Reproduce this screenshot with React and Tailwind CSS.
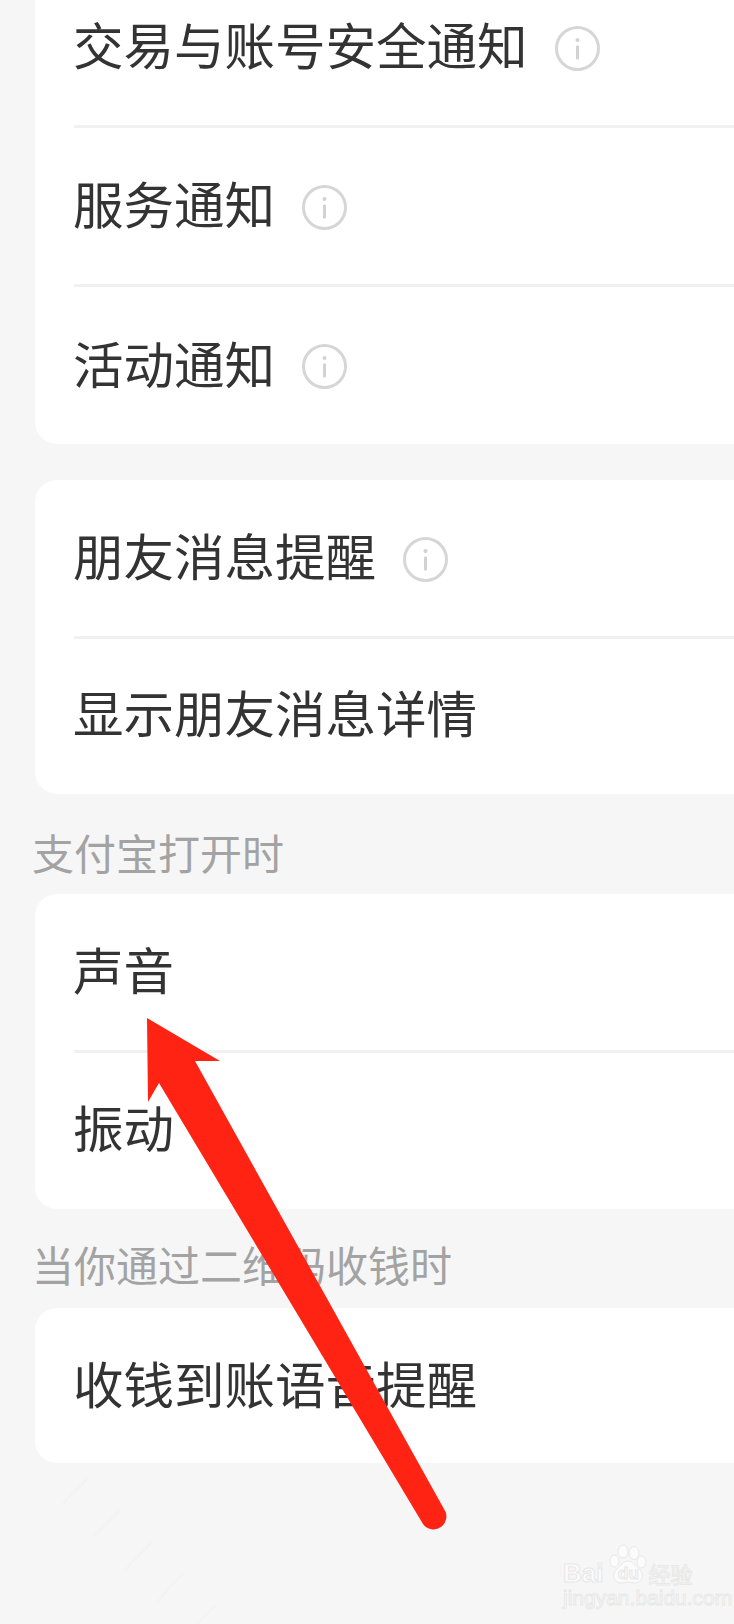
import React from 'react';

const FONT = "font-['Noto_Sans_CJK_SC','Noto_Sans',sans-serif]";

const InfoIcon = () => (
  <svg width="47" height="47" viewBox="0 0 47 47" fill="none" className="ml-[26px] mt-[2px] shrink-0">
    <circle cx="23.5" cy="23.5" r="21" stroke="#d6d6d6" strokeWidth="3" />
    <circle cx="23.5" cy="15" r="2" fill="#d2d2d2" />
    <rect x="22" y="20.5" width="3" height="14" rx="1" fill="#d2d2d2" />
  </svg>
);

const Row = ({ label, info, className = 'h-[156px]', textClass = '-mt-[7px]' }) => (
  <div className={`flex items-center ${className}`}>
    <span className={`text-[50.5px] leading-none text-[#333333] whitespace-nowrap ${textClass}`}>{label}</span>
    {info && <InfoIcon />}
  </div>
);

const Divider = () => <div className="ml-px h-[3px] bg-[#f1f1f1]" />;

const Card = ({ children, className = '' }) => (
  <div className={`ml-[35px] pl-[38px] bg-white rounded-l-[22px] ${className}`}>{children}</div>
);

const SectionLabel = ({ children, className = '' }) => (
  <div className={`ml-[32px] text-[42px] leading-none text-[#a3a3a3] whitespace-nowrap ${className}`}>{children}</div>
);

// baidu jingyan watermark, bottom right corner
const Watermark = () => (
  <div className="absolute right-[41px] bottom-[16px] w-[130px] flex flex-col gap-[4px] text-[#fbfbfb] [-webkit-text-stroke:1px_#e8e8e8]">
    <div className="flex items-end">
      <span className="text-[26px] leading-[22px] font-['Liberation_Sans',sans-serif] font-bold">Bai</span>
      <div className="relative ml-[5px] w-[40px] h-[40px] shrink-0">
        <svg width="40" height="40" viewBox="0 0 40 40" fill="#fbfbfb" stroke="#e8e8e8" strokeWidth="1">
          <ellipse cx="15" cy="7.5" rx="5" ry="6.5" />
          <ellipse cx="26" cy="9" rx="5" ry="6.5" />
          <ellipse cx="6.5" cy="17" rx="4.5" ry="6" />
          <ellipse cx="33.5" cy="18" rx="4.5" ry="6" />
          <path d="M20 17c5 0 7 5 11 8 5 4 5 14-5 14-2 0-4-1-6-1s-4 1-6 1c-10 0-10-10-5-14 4-3 6-8 11-8z" />
        </svg>
        <span className="absolute inset-x-0 bottom-[2px] text-center text-[17px] leading-none font-['Liberation_Sans',sans-serif] font-bold">du</span>
      </div>
      <span className="text-[22px] leading-[22px] whitespace-nowrap">经验</span>
    </div>
    <span className="text-[21px] leading-[20px] font-['Liberation_Sans',sans-serif] whitespace-nowrap">jingyan.baidu.com</span>
  </div>
);

// faint diagonal streaks in the lower left corner of the picture
const Streaks = () => (
  <svg className="absolute left-0 bottom-0" width="230" height="154" viewBox="0 0 230 154" fill="none" stroke="#f3f3f3" strokeWidth="2">
    <path d="M88 8 62 35" />
    <path d="M120 40 93 67" />
    <path d="M152 72 125 100" />
    <path d="M183 103 157 132" />
    <path d="M215 136 197 154" />
  </svg>
);

const Arrow = () => (
  <svg className="absolute inset-0" width="734" height="1624" viewBox="0 0 734 1624" fill="none">
    <path
      d="M147 1018 L220 1061 L195 1061 L444 1509 A12 12 0 0 1 423 1524 L159 1083 L148 1102 Z"
      fill="#ff2314"
    />
  </svg>
);

export default function App() {
  return (
    <div className={`relative w-[734px] h-[1624px] overflow-hidden bg-[#f6f6f6] ${FONT}`}>
      <div className="-mt-[31px]">
        <Card>
          <Row label="交易与账号安全通知" info />
          <Divider />
          <Row label="服务通知" info />
          <Divider />
          <Row label="活动通知" info className="h-[157px]" />
        </Card>

        <Card className="mt-[36px]">
          <Row label="朋友消息提醒" info />
          <Divider />
          <Row label="显示朋友消息详情" className="h-[155px]" textClass="-mt-[10px]" />
        </Card>

        <SectionLabel className="mt-[37px]">支付宝打开时</SectionLabel>
        <Card className="mt-[21px]">
          <Row label="声音" />
          <Divider />
          <Row label="振动" textClass="-mt-[10px]" />
        </Card>

        <SectionLabel className="mt-[34px]">当你通过二维码收钱时</SectionLabel>
        <Card className="mt-[23px]">
          <Row label="收钱到账语音提醒" className="h-[155px]" />
        </Card>
      </div>

      <Streaks />
      <Watermark />
      <Arrow />
    </div>
  );
}
